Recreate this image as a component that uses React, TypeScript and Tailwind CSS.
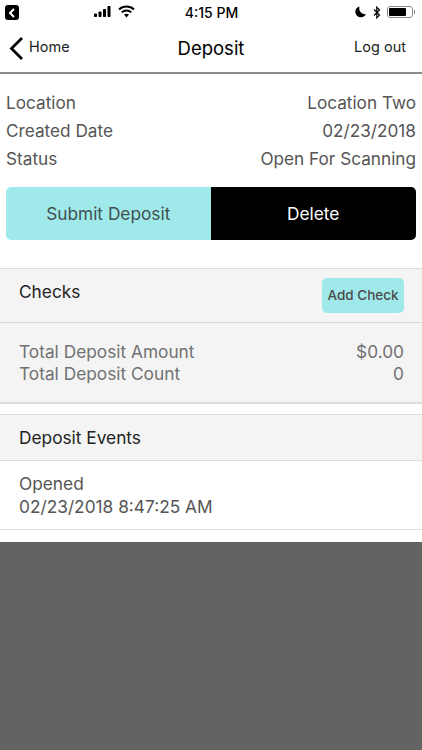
import React from "react";

const font = { fontFamily: '"Inter", "Liberation Sans", sans-serif' };

function Row({ a, b }: { a: string; b: string }) {
  return (
    <div className="flex justify-between h-[28px] items-center text-[17.2px] text-[#555555]">
      <span>{a}</span>
      <span>{b}</span>
    </div>
  );
}

export default function App() {
  return (
    <div className="w-[422px] h-[750px] bg-[#636363] flex flex-col overflow-hidden" style={font}>
      <div className="bg-white h-[542px] shrink-0 flex flex-col">
        {/* status bar */}
        <div className="h-[25px] relative flex items-center text-black shrink-0">
          <div className="absolute left-[5px] top-[5px] w-[14px] h-[15px] bg-black rounded-[3px] flex items-center justify-center">
            <svg width="8" height="10" viewBox="0 0 8 10"><path d="M6 1 L2 5 L6 9" fill="none" stroke="#fff" strokeWidth="2" /></svg>
          </div>
          <svg className="absolute left-[94px] top-[6px]" width="18" height="11" viewBox="0 0 18 11">
            <rect x="0" y="7.5" width="3" height="3.5" rx="0.7" />
            <rect x="4.5" y="5.5" width="3" height="5.5" rx="0.7" />
            <rect x="9" y="3" width="3" height="8" rx="0.7" />
            <rect x="13.5" y="0" width="3" height="11" rx="0.7" />
          </svg>
          <svg className="absolute left-[118px] top-[5px]" width="17" height="13" viewBox="0 0 17 13">
            <path d="M1 4.5 C5 0.5 12 0.5 16 4.5" fill="none" stroke="#000" strokeWidth="1.8" />
            <path d="M3.7 7.3 C6.2 4.9 10.8 4.9 13.3 7.3" fill="none" stroke="#000" strokeWidth="1.8" />
            <path d="M6 9.6 L8.5 12.4 L11 9.6 C9.6 8.4 7.4 8.4 6 9.6 Z" />
          </svg>
          <div className="w-full text-center text-[14px] font-medium pl-[1px]">4:15 PM</div>
          <svg className="absolute left-[355px] top-[6px]" width="11" height="12" viewBox="0 0 11 12">
            <path d="M4.5 0.5 A5.5 5.5 0 1 0 10.8 8.2 A6 6 0 0 1 4.5 0.5 Z" />
          </svg>
          <svg className="absolute left-[373px] top-[6px]" width="8" height="13" viewBox="0 0 8 13">
            <path d="M1 3.5 L6.5 9 L3.8 11.8 V1.2 L6.5 4 L1 9.5" fill="none" stroke="#000" strokeWidth="1.2" />
          </svg>
          <div className="absolute left-[387px] top-[6px] w-[26px] h-[12px] border border-[#888888] rounded-[3px] p-[1px]">
            <div className="w-[17px] h-full bg-black rounded-[1px]" />
          </div>
          <div className="absolute left-[414px] top-[10px] w-[1px] h-[4px] bg-[#888888]" />
        </div>
        {/* nav */}
        <div className="h-[49px] shrink-0 border-b-2 border-[#8c8c8c] flex items-center relative">
          <svg className="absolute left-[8px] top-[11px]" width="16" height="25" viewBox="0 0 16 25">
            <path d="M14 2 L3.5 12.5 L14 23" fill="none" stroke="#000" strokeWidth="2.8" />
          </svg>
          <span className="absolute left-[29px] top-[12px] text-[14.5px] leading-[20px] text-[#222222]">Home</span>
          <div className="w-full text-center text-[18.5px] text-black">Deposit</div>
          <span className="absolute right-[16px] top-[12px] text-[14.5px] leading-[20px] text-[#222222]">Log out</span>
        </div>
        {/* details */}
        <div className="px-[6px] pt-[15px] shrink-0">
          <Row a="Location" b="Location Two" />
          <Row a="Created Date" b="02/23/2018" />
          <Row a="Status" b="Open For Scanning" />
          <div className="flex h-[53px] mt-[14px] rounded-[5px] overflow-hidden text-[17.3px]">
            <div className="w-[204.5px] bg-[#a0e9ea] text-[#3f5050] flex items-center justify-center pt-[1px]">Submit Deposit</div>
            <div className="flex-1 bg-black text-white flex items-center justify-center pt-[1px]">Delete</div>
          </div>
        </div>
        {/* checks */}
        <div className="mt-[28px] border-t border-[#dcdcdc] shrink-0">
          <div className="h-[54px] bg-[#f4f4f4] border-b border-[#d8d8d8] flex justify-between pl-[19px] pr-[18px] pt-[9px]">
            <span className="text-[17.3px] leading-[26px] mt-[1px] text-[#222222]">Checks</span>
            <div className="w-[82px] h-[35px] bg-[#a0e9ea] rounded-[5px] flex items-center justify-center text-[13.5px] font-medium text-[#4a4a4a]">Add Check</div>
          </div>
          <div className="h-[81px] bg-[#f4f4f4] border-b-2 border-[#dddddd] pl-[19px] pr-[18px] pt-[18px] text-[17.3px] leading-[22.5px] text-[#717171]">
            <div className="flex justify-between"><span>Total Deposit Amount</span><span>$0.00</span></div>
            <div className="flex justify-between -mt-[0.5px]"><span>Total Deposit Count</span><span>0</span></div>
          </div>
        </div>
        {/* events */}
        <div className="mt-[10px] border-t border-[#dcdcdc] shrink-0">
          <div className="h-[46px] bg-[#f4f4f4] border-b border-[#dcdcdc] flex items-center pl-[19px] pr-[18px] pt-[1px] text-[17.3px] text-[#222222]">Deposit Events</div>
          <div className="h-[69px] border-b border-[#dedede] pl-[19px] pr-[18px] pt-[11px] text-[17.3px] leading-[23px] text-[#555555]">
            <div>Opened</div>
            <div>02/23/2018 8:47:25 AM</div>
          </div>
        </div>
      </div>
    </div>
  );
}
